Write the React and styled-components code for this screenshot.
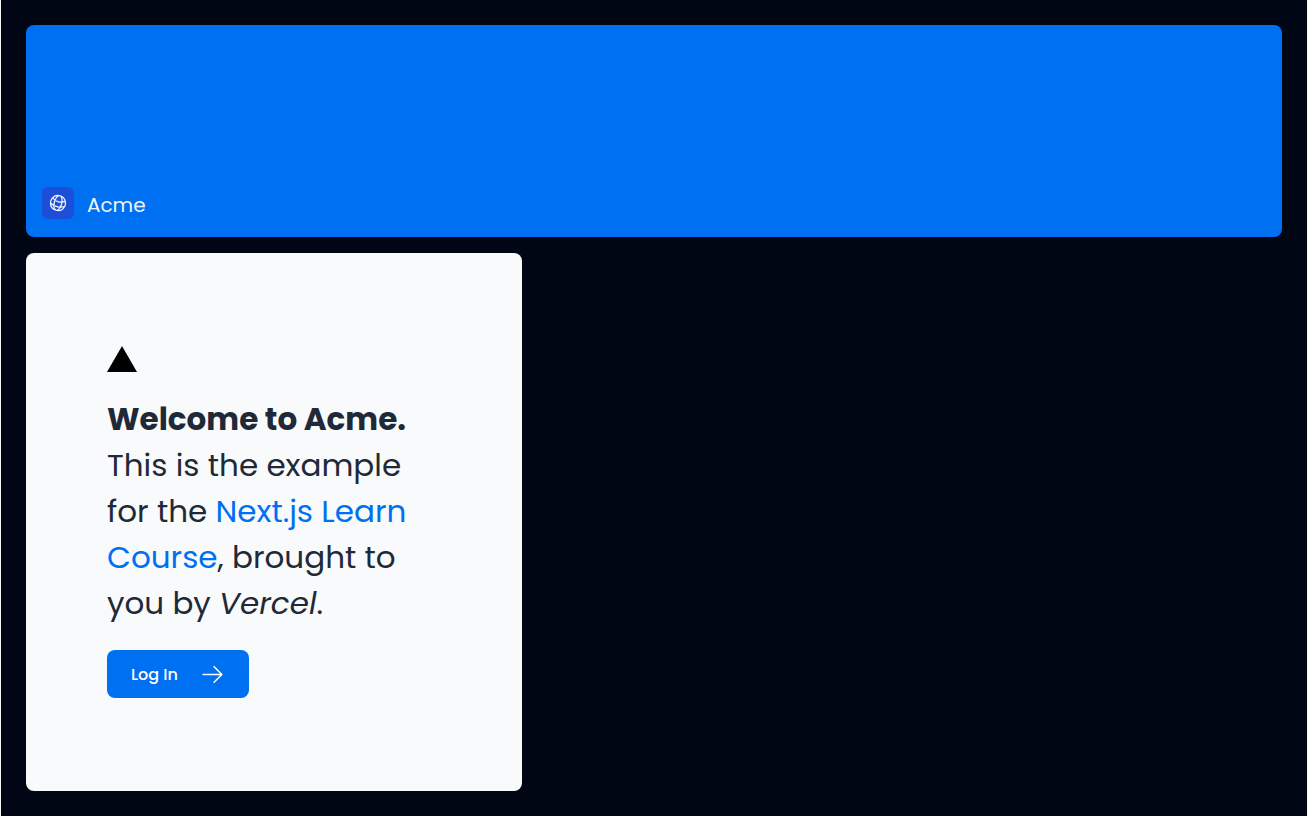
import React from 'react';
import styled, { createGlobalStyle } from 'styled-components';
import { HiOutlineGlobeAlt, HiOutlineArrowRight } from 'react-icons/hi2';

const GlobalStyle = createGlobalStyle`
  *, *::before, *::after { box-sizing: border-box; }
  body {
    margin: 0;
    background: #000614;
    font-family: Poppins, Inter, "Liberation Sans", sans-serif;
  }
`;

const Page = styled.main`
  display: flex;
  flex-direction: column;
  gap: 16px;
  min-height: 100vh;
  padding: 25px;
  border: solid #f4f5f7;
  border-width: 0 1px;
`;

const Banner = styled.header`
  display: flex;
  align-items: flex-end;
  height: 212px;
  padding: 16px;
  border-radius: 8px;
  background: #0070f3;
`;

const Brand = styled.div`
  display: flex;
  align-items: center;
  gap: 13px;
  color: #eef5ff;
  font-size: 20px;
  line-height: 32px;
`;

const BrandTile = styled.span`
  display: flex;
  align-items: center;
  justify-content: center;
  width: 32px;
  height: 32px;
  border-radius: 6px;
  background: #1d4ed8;

  svg {
    width: 20px;
    height: 20px;
    transform: rotate(15deg);
  }
`;

const BrandName = styled.span`
  padding-top: 4px;
`;

const Columns = styled.div`
  display: grid;
  grid-template-columns: 2fr 3fr;
  gap: 16px;
  flex: 1;
`;

const Card = styled.section`
  display: flex;
  flex-direction: column;
  align-items: flex-start;
  justify-content: center;
  gap: 24px;
  padding: 40px 81px;
  border-radius: 8px;
  background: #f9fafb;
`;

const Intro = styled.p`
  margin: 0;
  color: #1f2937;
  font-size: 31px;
  line-height: 46px;
`;

const CourseLink = styled.a`
  color: #0070f3;
  text-decoration: none;
`;

const LoginButton = styled.button`
  display: flex;
  align-items: center;
  gap: 22px;
  height: 48px;
  padding: 0 24px;
  border: 0;
  border-radius: 8px;
  background: #0070f3;
  color: #ffffff;
  font: inherit;
  font-size: 16px;
  font-weight: 500;
  cursor: pointer;

  svg {
    width: 25px;
    height: 25px;
  }
`;

export default function App() {
  return (
    <>
      <GlobalStyle />
      <Page>
        <Banner>
          <Brand>
            <BrandTile>
              <HiOutlineGlobeAlt aria-hidden="true" />
            </BrandTile>
            <BrandName>Acme</BrandName>
          </Brand>
        </Banner>
        <Columns>
          <Card>
            <svg width="30" height="26" viewBox="0 0 30 26" aria-hidden="true">
              <path d="M15 0L30 26H0Z" fill="#000000" />
            </svg>
            <Intro>
              <strong>Welcome to Acme.</strong> This is the example for the{' '}
              <CourseLink href="#learn">Next.js Learn Course</CourseLink>, brought to you by{' '}
              <em>Vercel</em>.
            </Intro>
            <LoginButton type="button">
              Log In
              <HiOutlineArrowRight aria-hidden="true" />
            </LoginButton>
          </Card>
        </Columns>
      </Page>
    </>
  );
}
